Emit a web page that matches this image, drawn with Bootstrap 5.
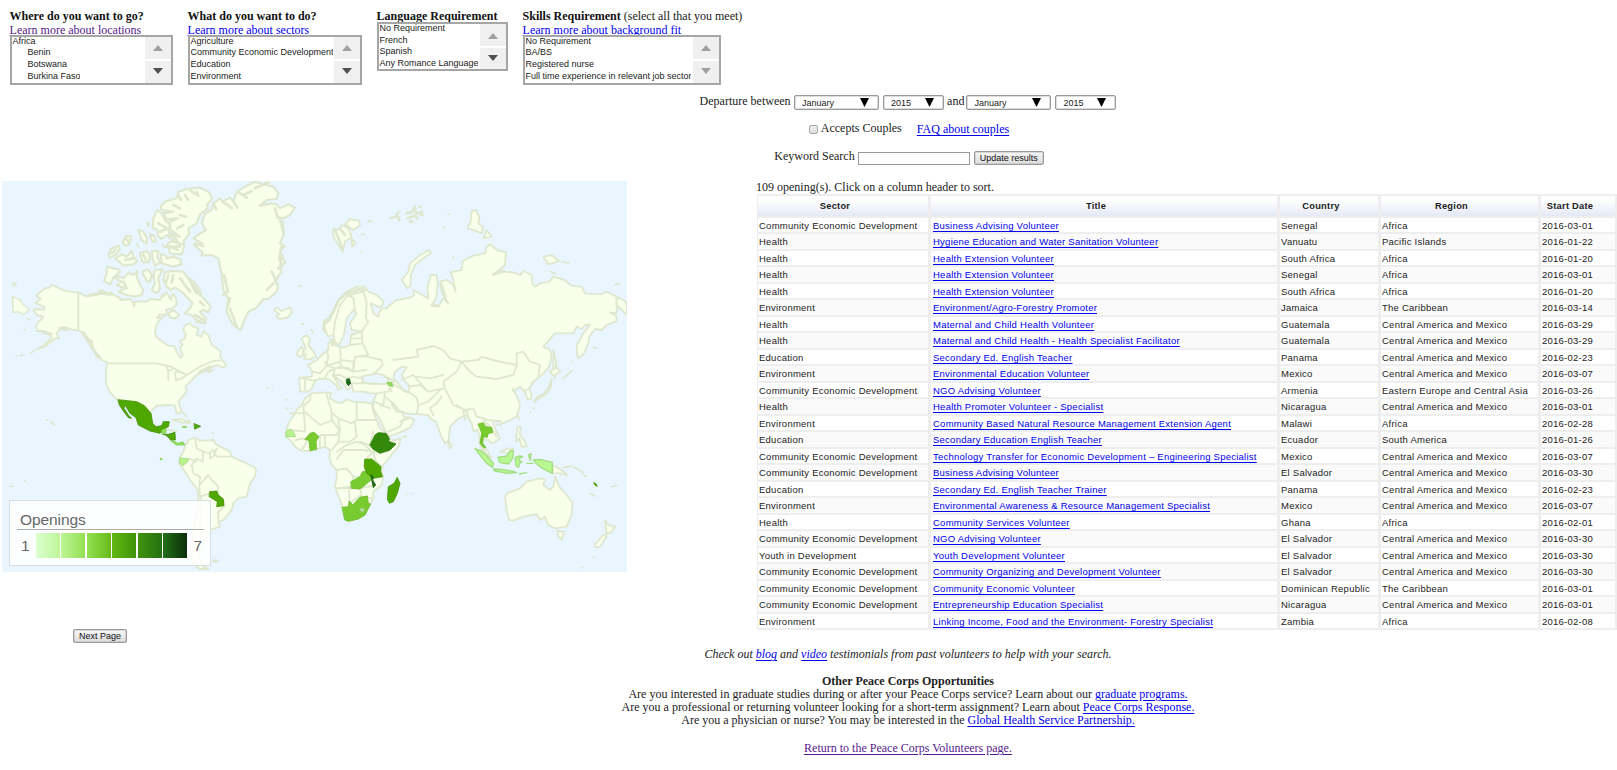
<!DOCTYPE html>
<html lang="en">
<head>
<meta charset="utf-8">
<title>Volunteer Openings</title>
<link href="https://cdn.jsdelivr.net/npm/bootstrap@5.3.0/dist/css/bootstrap.min.css" rel="stylesheet">
<script src="https://cdn.jsdelivr.net/npm/bootstrap@5.3.0/dist/js/bootstrap.bundle.min.js"></script>
<style>
body{font-family:"Liberation Serif",serif;font-size:12px;line-height:13.3px;color:#222;background:#fff;overflow:hidden;height:770px}
a{color:#0000ee}
a:hover{color:#0000ee}
a.seen{color:#551a8b}
.filters{padding:10px 0 0 9.6px;height:95px}
.filters b{color:#111}
.filters a{display:block;width:max-content;height:12px;line-height:14px;margin-bottom:-.4px}
.f1{width:178px}.f2{width:189px}.f3{width:146px}
.w1{width:163px}.w2{width:174px}.w3{width:131px}.w4{width:198px}
.pick{border:2px solid #a6a6a6;background:#fff;position:relative;font:9px/11.7px "Liberation Sans",sans-serif;height:50px}
.f3 .pick{height:49px;margin-top:-1px}
.opts{padding-left:.8px;height:46px;white-space:nowrap;overflow:hidden}
.opts div:first-child{margin-top:-1.4px}
.sub{padding-left:15px}
.bars{width:26px;gap:2px}
.bars span{background:#f0f0f0;flex:1;display:flex;align-items:center;justify-content:center}
.bars span::after{content:"";border:5px solid transparent;border-top:0;border-bottom:6px solid #a0a0a0;margin-top:1px}
.bars span.dn::after{border-bottom:0;border-top:6px solid #a0a0a0;margin-top:-1px}
.bars span.on::after{border-top-color:#505050}
.searcharea,.foot{margin-left:199px}
.searcharea{height:86px}
.sel{border:1px solid #999;border-radius:2px;height:15px;font:9px/14px "Liberation Sans",sans-serif;padding:0 9px 0 7px;box-shadow:inset 0 0 0 .5px #bbb}
.sel svg{width:9px;height:9px}
.mo{width:85px}.yr{width:61px}
.and{margin:0 2px 0 3px}
.kw{border:1px solid #999;width:112px;height:13px}
.push{font:9px/12px "Liberation Sans",sans-serif;color:#111;border:1px solid #999;border-radius:2px;background:linear-gradient(#f6f6f6,#dcdcdc);padding:0 5px;height:14px;box-shadow:inset 0 0 0 .5px #bbb}
.cb{width:9px;height:9px;border:1px solid #aaa;border-radius:2px;background:linear-gradient(#f0f0f0,#ddd);margin:3px 3px 0 2px}
.mapcol{width:757px;padding-left:2px}
.mapbox{width:625px;height:391px;position:relative}
.mapbox svg{display:block}
.legend{left:7px;top:319px;width:202px;height:66px;border:1px solid #d8dfe2;background:rgba(255,255,255,.85);font:15.5px/18px "Liberation Sans",sans-serif;color:#666;padding:10px 6px 0 7px}
.legend .ttl{padding-left:3px;height:19px;border-bottom:1.5px solid #aaa;margin-bottom:3px;letter-spacing:-.08px}
.scale{padding:0 2px 0 4px}
.sw{width:24px;height:25px}
.nextrow{padding:57px 0 0 71px}
.jobs{border-collapse:separate;border-spacing:0;table-layout:fixed;width:860px;margin-left:1px;font:9.5px/12px "Liberation Sans",sans-serif;letter-spacing:.245px;color:#222}
.jobs th{height:23px;border:solid #eee;border-width:2px 2px 1px 1px;background:linear-gradient(#fff 20%,#e4e9f5);text-align:center;padding:0 16px 0 0;color:#222;font-size:9.3px}
.jobs td{padding:1px 0 0 1px;border:solid #eee;border-width:1px 2px 1px 1px;white-space:nowrap;vertical-align:middle}
.jobs td:nth-child(2){padding-left:2px}
.jobs .o td{height:17px;border-bottom-width:2px}
.jobs .e td{height:16px;background:#fafafa;border-top-width:0}
.jobs a,.foot a,.searcharea a{text-underline-offset:2px}
.foot{padding-top:5px}
</style>
</head>
<body>
<div class="d-flex filters">
 <div class="f1"><b>Where do you want to go?</b><a class="seen" href="#">Learn more about locations</a>
  <div class="pick w1 d-flex justify-content-between"><div class="opts"><div>Africa</div><div class="sub">Benin</div><div class="sub">Botswana</div><div class="sub">Burkina Faso</div></div><div class="bars d-flex flex-column"><span></span><span class="dn on"></span></div></div></div>
 <div class="f2"><b>What do you want to do?</b><a href="#">Learn more about sectors</a>
  <div class="pick w2 d-flex justify-content-between"><div class="opts"><div>Agriculture</div><div>Community Economic Development</div><div>Education</div><div>Environment</div></div><div class="bars d-flex flex-column"><span></span><span class="dn on"></span></div></div></div>
 <div class="f3"><b>Language Requirement</b>
  <div class="pick w3 d-flex justify-content-between"><div class="opts"><div>No Requirement</div><div>French</div><div>Spanish</div><div>Any Romance Language</div></div><div class="bars d-flex flex-column"><span></span><span class="dn on"></span></div></div></div>
 <div><b>Skills Requirement</b> (select all that you meet)<a href="#">Learn more about background fit</a>
  <div class="pick w4 d-flex justify-content-between"><div class="opts"><div>No Requirement</div><div>BA/BS</div><div>Registered nurse</div><div>Full time experience in relevant job sector</div></div><div class="bars d-flex flex-column"><span></span><span class="dn"></span></div></div></div>
</div>
<div class="searcharea d-flex flex-column align-items-center">
 <div class="d-flex" style="height:27px"><span style="margin-right:3.5px">Departure between</span>
  <div class="sel mo d-flex justify-content-between align-items-center"><span>January</span><svg viewBox="0 0 9 9"><path d="M0 0H9L4.5 9z"/></svg></div>
  <div class="sel yr d-flex justify-content-between align-items-center ms-1"><span>2015</span><svg viewBox="0 0 9 9"><path d="M0 0H9L4.5 9z"/></svg></div>
  <span class="and">and</span>
  <div class="sel mo d-flex justify-content-between align-items-center"><span>January</span><svg viewBox="0 0 9 9"><path d="M0 0H9L4.5 9z"/></svg></div>
  <div class="sel yr d-flex justify-content-between align-items-center ms-1"><span>2015</span><svg viewBox="0 0 9 9"><path d="M0 0H9L4.5 9z"/></svg></div></div>
 <div class="d-flex align-items-start" style="height:28px"><span class="cb"></span><span>Accepts Couples</span><a href="#" style="line-height:14px;margin-left:15px">FAQ about couples</a></div>
 <div class="d-flex"><span style="margin:0 3px 0 2px">Keyword Search</span><span class="kw" style="margin-top:2px"></span><button class="push ms-1" style="margin-top:1px">Update results</button></div>
</div>
<div class="d-flex">
 <div class="mapcol">
  <div class="mapbox">
<svg width="625" height="391" viewBox="6 18 1875 1173" preserveAspectRatio="none" stroke-linejoin="round" stroke-linecap="round">
<rect x="0" y="0" width="1890" height="1200" fill="#e9f6ff"/>
<g fill="#f8ffeb" stroke="#dfe7cf" stroke-width="5.5">
<path d="M235,352L205,350 180,342 168,335 155,330 148,338 135,340 120,352 108,362 122,372 112,380 106,384 120,390 134,396 132,404 108,402 100,406 110,420 130,425 122,435 115,440 108,455 112,468 125,468 130,474 150,475 155,488 140,503 130,512 110,524 140,512 150,502 168,490 176,488 170,475 178,465 190,456 205,460 220,465 235,467 255,475 262,490 275,497 278,520 290,535 300,545 305,555 322,562 318,585 318,625 328,650 345,668 355,678 410,685 432,695 450,712 470,692 500,690 525,692 530,715 540,715 543,705 535,680 560,650 556,635 580,610 590,600 610,590 640,585 625,592 628,580 650,570 672,578 678,570 660,545 662,530 650,520 635,510 625,480 610,468 605,485 590,480 596,460 580,455 570,445 555,450 550,465 557,480 555,490 540,498 548,510 540,515 548,545 540,548 530,530 525,515 505,512 480,495 468,485 465,470 468,455 475,440 490,425 472,430 478,418 500,420 498,405 515,400 530,390 528,370 520,355 512,375 500,352 490,365 488,358 480,375 450,372 440,380 405,380 402,395 398,380 390,372 360,375 362,370 345,362 332,352 320,355 310,348 300,345 290,360 280,358 260,365Z"/>
<path d="M235,352V467M322,565H465L500,572 515,575 540,590 560,600 600,575 640,558 660,556M500,572 505,590 520,580 540,590 525,592 528,618M505,590 505,615M560,600 545,610 528,615" fill="none"/>
<path d="M180,460l20,4M250,475l28,45 18,28M265,362l40,-8 30,4M590,440l25,3M600,592l30,-15M128,470l24,8" fill="none" stroke-width="10"/>
<!-- Arctic islands -->
<g stroke-width="6.5">
<path d="M320,275L355,283 360,290 340,308 330,328 312,318 320,295ZM355,303L370,310 385,293 400,300 412,288 410,305 420,330 430,345 425,360 405,365 380,360 355,350 375,340 350,330 365,320 348,310ZM430,288L445,284 455,300 450,320 440,318 435,305 428,300ZM465,285L488,283 475,310 480,340 472,355 455,345 465,325 460,305ZM495,292L520,288 550,290 560,305 580,318 600,345 605,365 632,392 625,412 610,405 600,410 618,430 612,445 590,435 575,420 555,415 570,400 578,385 560,365 545,350 525,338 512,345 500,335 490,315ZM505,415L520,405 538,420 525,430 510,428ZM482,237L495,240 500,250 520,245 540,252 545,268 520,275 485,265ZM420,235L440,228 450,240 448,260 430,262 425,255ZM455,228L475,228 472,245 480,262 465,272 458,250ZM325,240L335,220 355,212 360,222 345,240 330,248ZM345,250L365,238 380,245 395,228 400,245 412,258 400,268 370,272 360,262ZM368,203L378,182 392,183 390,205 378,213ZM415,165L428,168 442,190 440,205 425,195ZM450,178L462,182 468,200 456,200ZM460,130L472,105 485,115 495,135 510,148 505,165 512,190 500,180 485,192 475,185 472,165 458,158ZM482,95L495,80 530,70 535,50 560,42 600,38 625,50 637,70 620,90 625,98 600,118 590,145 565,160 568,175 550,200 552,215 545,238 510,235 505,215 535,225 500,210 512,200 525,190 515,180 540,185 512,165 510,140 535,130 500,132 490,115 520,110 485,105Z"/>
<path d="M440,142L448,146 444,155ZM410,205l6,12M485,208l8,10M37,365L60,375 70,390 88,402 80,412 70,418 55,410 40,412ZM38,325h9v7h-8zM80,430l12,5M72,464l4,1M48,543l3,0M60,541l12,0M92,534l10,-6M110,524l12,-6" stroke-width="4.5"/>
<!-- Greenland -->
<path d="M580,190L600,175 618,165 605,145 615,115 635,105 640,85 660,70 668,80 690,68 700,78 712,50 735,35 765,20 790,28 820,35 835,55 830,72 800,75 780,92 815,85 830,88 840,100 865,88 885,98 870,120 850,130 838,128 845,155 850,180 840,205 855,215 840,225 845,240 855,262 840,280 845,290 825,318 835,330 830,350 805,372 790,372 770,398 745,410 735,430 722,465 710,458 695,442 680,410 685,370 670,345 665,300 655,250 635,240 605,242 608,232 582,210 608,205Z"/>
</g>
<path d="M640,85l8,18M668,80l28,20M712,50l28,18M730,60l25,-12M765,40l40,-18M700,78l12,20M825,100l8,28M845,215l-8,40M855,262l-20,18M815,290l10,20M800,345l20,-20M682,350l-12,10M690,370l-5,20M848,140l4,40M842,235v50M820,300l12,30M672,300l12,50M690,400l20,55M585,205l25,8M520,90l20,10M555,60l10,15M590,50l5,12M540,120l18,5M475,145l25,15M480,170l20,-8M535,60l8,15M570,45l15,12M520,200l25,8M515,175l18,25M550,150l-18,10M570,320l20,35M540,310l30,40M505,300l-8,25M370,320l10,20M565,310l35,50M585,420l25,15M600,380l12,12M520,300l-5,22M375,255l25,-5M430,240l8,14M335,235l12,-12M378,190l8,10M495,215h45" fill="none" stroke-width="8"/>
<path d="M822,405L830,398 845,408 870,397 876,412 862,428 840,432 828,425 838,418ZM898,334l7,-3M906,446l4,2M935,465l4,6M905,490L920,480 930,492 925,510 940,530 948,545 930,553 912,552 918,540 908,530 918,520ZM892,530L905,515 912,525 908,543 893,545Z"/>
<!-- Eurasia -->
<path d="M970,455L972,438 985,430 1000,410 1012,380 1030,360 1040,350 1060,340 1075,335 1092,335 1105,350 1130,360 1150,378 1148,390 1140,397 1112,385 1120,415 1135,425 1137,412 1148,400 1160,400 1170,390 1190,375 1230,368 1242,360 1240,345 1285,370 1282,340 1292,300 1310,300 1313,330 1310,365 1296,390 1315,395 1330,370 1345,385 1325,350 1320,320 1340,315 1360,330 1367,350 1360,315 1352,292 1385,285 1388,258 1420,242 1455,235 1460,215 1472,208 1490,225 1518,232 1515,270 1480,300 1495,290 1510,290 1540,292 1562,300 1570,288 1595,300 1597,325 1605,335 1620,325 1648,320 1660,305 1695,315 1712,332 1745,335 1755,355 1800,358 1820,350 1850,365 1850,415 1830,412 1850,425 1848,440 1820,450 1805,465 1785,462 1768,485 1765,505 1752,535 1735,550 1730,530 1732,508 1748,478 1770,448 1755,450 1745,462 1730,455 1720,475 1665,475 1630,515 1650,525 1655,545 1648,575 1625,600 1600,620 1588,640 1595,660 1593,672 1582,672 1575,650 1560,635 1540,650 1538,640 1550,662 1560,690 1550,725 1520,740 1505,745 1500,738 1478,740 1485,760 1500,790 1482,803 1475,805 1465,795 1450,792 1445,810 1462,830 1475,848 1465,842 1445,820 1438,800 1438,780 1432,765 1420,768 1415,745 1400,720 1375,730 1350,755 1346,795 1335,805 1322,780 1308,740 1292,732 1285,720 1260,718 1220,715 1195,705 1185,690 1175,688 1190,710 1205,712 1212,725 1228,728 1243,735 1230,758 1200,772 1165,785 1155,765 1140,735 1120,700 1120,680 1130,655 1115,655 1090,650 1060,650 1055,625 1050,640 1042,645 1035,635 1025,620 1005,605 998,600 1018,632 1025,640 1015,645 1010,632 990,615 975,610 955,612 945,618 935,640 925,650 900,650 898,608 935,605 937,590 925,570 950,555 965,540 985,525 985,505 1000,495 1005,512 1030,518 1050,510 1053,480 1088,470 1055,465 1050,445 1070,415 1060,405 1040,430 1035,460 1030,485 1015,512 1005,500 1000,480 985,485Z"/>
<path d="M1085,605l20,-5 25,-5 18,5 20,15 -10,12 -40,0 -28,-5zM1185,590l20,-15 15,2 -15,22 10,20 15,14 -4,20 -16,-5 -12,-20 -18,-18z" fill="#e9f6ff"/>
<path d="M975,470l-4,-20 18,-18 14,-28 14,-30 25,-20 40,-12 12,2M993,495l4,15M1322,325l14,40M1480,298l30,-10M1296,390l14,2" fill="none" stroke-width="9"/>
<path fill="none" d="M1000,480L1005,440 1020,390 1045,360 1060,370 1065,405M1045,360 1090,350M1090,345L1100,385 1098,430 1105,440 1085,470M1085,475L1088,505 1105,540 1065,545 1060,590M1050,510 1088,505M1055,490H1085M1065,545L1100,545 1145,555 1148,570 1120,598M1020,518L1022,555 1060,560 1060,590 1025,575 1020,560 980,572 975,560M980,525L985,545 980,570 1005,580 1045,578 1060,590 1100,585M1005,580L1000,600 1020,600 1040,610 1060,605 1085,610M940,590L960,595 980,572M975,610 985,590 1020,575M1040,610L1040,630M1050,625L1085,625 1090,615M915,615V645M898,608l40,8 15,-2M1148,600L1185,620 1165,625 1175,650M1060,625l70,0M1130,655L1165,650 1175,620M1155,650L1150,690 1120,680M1155,665L1185,690M1140,690L1170,700M1180,555L1255,545 1250,525 1300,513 1330,525 1350,550 1385,560 1435,555 1445,545 1490,558 1550,570 1550,535 1570,530 1590,560 1620,570 1615,600M1385,560L1405,585 1430,605 1490,612 1540,600 1550,570M1385,560L1370,590 1330,620 1335,640 1360,690 1395,705 1420,700M1225,635L1260,630 1285,650 1330,640M1205,615L1240,600 1275,640M1225,650L1250,668 1255,690 1250,718M1255,690L1285,680 1310,655 1320,645M1300,720L1290,700 1310,685 1325,665M1175,625L1220,650M1200,740L1232,728M1165,770L1200,755 1212,730M1370,690L1400,710 1405,725M1390,705L1395,735M1420,700L1430,725 1450,730 1462,735 1500,738M1450,730L1460,755 1478,765 1490,785M1445,750L1462,745 1475,760M1570,650 1590,640M1250,605L1290,610 1330,600"/>
<path d="M1205,315L1225,290 1230,265 1260,240 1288,225 1292,235 1270,250 1245,270 1232,300 1232,332 1222,340ZM1000,160L1015,165 1025,150 1045,160 1055,185 1035,200 1028,230 1012,205 1000,185ZM1035,148L1050,132 1078,138 1080,152 1060,165ZM1055,190l12,15 -10,10zM1415,108L1428,105 1438,125 1435,145 1450,155 1445,175 1420,165 1402,160 1412,140ZM1450,190L1460,165 1475,185ZM1630,245L1655,240 1678,258 1645,268ZM1685,260l20,4M1652,290l14,6M1845,330l12,-4M1850,365L1875,378 1881,390V420L1865,405 1850,390ZM1083,232h2M1110,139h4M1345,118h4M1330,157h6M1360,245v6M1660,525L1668,560 1665,610 1660,590ZM1780,516l8,4M1690,610l25,-22M1105,140l8,-2M1085,178h8M1300,300v1M1715,560v1"/>
<path d="M1172,130l22,-6 4,12M1190,117l8,-6M1218,115l18,-4 8,-16 4,20 18,-4M1222,130l22,-8 8,8M1230,140h8M1262,120h6M1258,95h2M1005,165l10,25 12,30M1020,160l15,20" fill="none" stroke-width="8"/>
<!-- Japan, Philippines, other islands of Asia and Oceania -->
<path d="M1650,590L1670,575 1680,590 1660,602ZM1655,610L1652,640 1635,660 1610,675 1602,682 1612,665 1630,658 1648,635ZM1552,758L1562,755 1560,780 1575,800 1580,815 1565,815 1558,790 1548,800ZM1554,722l4,12M1490,748l12,2M1346,800L1356,812 1350,820 1345,812ZM1500,830L1525,820 1540,822 1530,835ZM1445,818L1462,825 1470,845 1460,838ZM1658,870L1685,885 1702,900 1680,895 1658,895ZM1690,878l22,-5M1720,875l30,18M1752,900l6,4M1770,955l15,8M1835,935l15,-4M1220,957v1M1234,955v1M1210,786l10,-2M1590,712l1,-1M1600,700l1,-1"/>
<path d="M1515,965L1522,955 1560,940 1580,920 1600,915 1615,910 1635,913 1630,930 1650,945 1660,935 1665,905 1678,935 1700,960 1718,985 1715,1020 1700,1055 1665,1060 1645,1050 1635,1025 1620,1035 1610,1017 1570,1025 1540,1037 1527,1035 1520,1005ZM1672,1068L1692,1070 1685,1095 1675,1085ZM1815,1037L1825,1050 1845,1055 1835,1070 1820,1078 1818,1060ZM1785,1108L1810,1080 1820,1085 1800,1115 1788,1118ZM1780,1146h2M1745,1178h2"/>
<!-- South America -->
<path d="M555,815L565,795 585,788 600,797 640,795 648,808 690,830 695,845 740,865 768,880 765,905 750,925 740,965 715,970 700,985 695,1005 670,1035 655,1040 660,1055 630,1065 620,1085 610,1105 595,1145 610,1175 625,1182 600,1182 575,1165 570,1125 580,1065 595,985 593,945 570,915 545,875 537,865 540,845 550,830ZM640,1156h12v4h-12zM518,735L545,732 570,745 545,742ZM548,712l10,12M565,735l5,4M638,774v1M140,735h3M155,742l8,8M30,934h8M74,918h1M802,639h2M815,643h2M858,674h2M860,700h2M872,700h2"/>
<path fill="none" d="M585,788L590,820 610,830 608,860 590,850 575,870 580,895 600,905 598,930 625,900 635,915 655,935 652,955 668,975 672,995 655,1010M610,830L630,835 640,825 650,845 690,845M630,835V850L640,845 650,820M565,850L590,860M598,930L600,965 630,955M600,965L605,985 600,1040 605,1100M655,1010L655,1035M672,995l-18,18M490,760l40,10"/>
<!-- Africa -->
<g transform="translate(930,585)">
<path d="M5,70L-15,85 -25,105 -40,120 -52,140 -65,160 -70,180 -72,200 -55,215 -45,230 -25,242 0,243 20,238 45,230 60,240 58,262 65,285 80,300 80,325 75,350 88,385 97,410 105,440 110,452 130,450 155,440 180,405 190,385 190,365 215,345 220,320 213,300 220,285 240,260 265,230 273,205 250,212 235,205 225,185 210,175 200,150 190,125 185,100 160,97 130,95 110,88 95,100 75,95 60,85 62,68 30,68Z"/>
<path fill="none" d="M2,72L0,90 -20,108V130H-60M-20,110L-14,185 -60,180M50,75L65,125V150L85,175M140,95V150H200M65,128L85,145 125,160 140,150M135,160L140,200 120,215 90,215M85,150L90,175 80,195H30V230M-20,122L30,165 70,150M90,180L85,215 65,240M80,245L110,225 140,215 165,225 180,240M80,268L100,240H160L190,245 165,270V320H130L125,350 78,355M190,245L195,270 215,290M195,245H235M80,300L110,295 130,320M78,355H150L185,348M118,360V405M118,400L155,375 150,355M155,380L185,385M190,185L180,225 150,215M-45,210L-15,205M-25,242L-10,215M45,230V200"/>
</g>
</g>
<g stroke-width="2.5">
<!-- Mexico and Central America -->
<path fill="#4fa800" stroke="#458f08" d="M355,674L410,680 433,692 453,715 458,745 468,755 485,752 490,740 508,740 505,755 490,762 480,775 450,768 415,750 408,728 390,715 375,690 372,700 385,720 395,730 385,728 370,708 358,690ZM490,778L505,778 525,772 526,795 512,795 500,782ZM583,746L602,754 585,762ZM630,950L650,948 655,960 670,972 672,992 650,995 652,980 628,965Z"/>
<path fill="#8fe05a" stroke="#82ce52" d="M486,765l12,-4 0,12 -12,4zM512,797L525,800 535,805 548,800 555,810 530,810ZM548,755h12v2h-12zM482,850h4v4h-4z"/>
<path fill="#b8f28c" stroke="#a5da7f" d="M540,848L566,852 562,862 548,872 540,865Z"/>
<g transform="translate(930,585)">
<path fill="#b8f090" stroke="#a3d880" d="M-72,185L-60,177 -50,185 -43,200 -72,200Z"/>
<path fill="#78cc30" stroke="#6aba28" d="M-15,208L0,190 12,187 27,200 22,208 18,215 20,238 0,242 -3,212ZM123,335L150,320 157,305 175,305 187,315 183,330 165,345 150,357 125,355ZM97,412L115,410 118,393 128,405 150,382 172,378 175,400 182,402 165,435 145,447 115,454 105,450ZM505,162L520,158 525,170 545,172 548,188 535,190 532,202 520,200 518,220 528,233 520,232 510,220 515,190Z"/>
<path fill="#b8d9a0" stroke="#b0d098" d="M150,418l8,-4 5,6 -7,6z"/>
<path fill="#338a0a" stroke="#2c7b08" d="M180,225L195,195 205,188 228,190 238,205 236,214 258,222 240,240 210,250 190,238Z"/>
<path fill="#4fa800" stroke="#469600" d="M165,268L185,267 213,290 212,305 218,320 190,325 170,310 163,290ZM262,323L270,340 262,370 250,395 238,400 232,388 235,350 252,340ZM852,338l6,3 4,8 -6,-3z"/>
<path fill="#1d6b1a" stroke="#1b6018" d="M183,315L190,320 188,330 197,345 190,353 186,335ZM110,28L118,26 122,40 115,47 110,40Z"/>
<path fill="#8fe05a" stroke="#82ce52" d="M232,37L245,38 249,50 236,46Z"/>
<path fill="#b8f890" stroke="#a5dd85" stroke-width="4" d="M495,236L515,243 535,262 550,280 548,292 530,280 515,262ZM550,297L575,298 605,303 620,308 590,310 555,303ZM563,262L590,258 600,242 610,243 608,265 595,282 570,278ZM615,262l15,-4 8,2 -14,8 12,8 -8,4 -2,12 -8,-4zM655,255l8,-4 -2,20zM628,312l22,-4M670,270L690,268 727,277V310L705,300 690,290 678,280ZM650,280h20"/>
</g></g>
</svg>
   <div class="legend position-absolute"><div class="ttl">Openings</div>
    <div class="scale d-flex align-items-center justify-content-between"><span>1</span><div class="d-flex" style="gap:1.5px">
     <i class="sw" style="background:linear-gradient(90deg,#dcffd0,#bdf598)"></i><i class="sw" style="background:linear-gradient(90deg,#bdf598,#93e052)"></i><i class="sw" style="background:linear-gradient(90deg,#93e052,#68bb1a)"></i><i class="sw" style="background:linear-gradient(90deg,#62b814,#3f930a)"></i><i class="sw" style="background:linear-gradient(90deg,#3f930c,#257014)"></i><i class="sw" style="background:linear-gradient(90deg,#237018,#0c2e08)"></i></div><span>7</span></div></div>
  </div>
  <div class="nextrow"><button class="push d-block">Next Page</button></div>
 </div>
 <div>
  <div style="height:13px">109 opening(s). Click on a column header to sort.</div>
  <table class="jobs">
   <colgroup><col style="width:173px"><col style="width:349px"><col style="width:101px"><col style="width:160px"><col style="width:77px"></colgroup>
   <thead><tr><th>Sector</th><th>Title</th><th>Country</th><th>Region</th><th>Start Date</th></tr></thead>
   <tbody id="rows"></tbody>
  </table>
 </div>
</div>
<div class="foot text-center">
 <div style="height:26.5px"><i>Check out <a href="#">blog</a> and <a href="#">video</a> testimonials from past volunteers to help with your search.</i></div>
 <div><b>Other Peace Corps Opportunities</b></div>
 <div>Are you interested in graduate studies during or after your Peace Corps service? Learn about our <a href="#">graduate programs.</a></div>
 <div>Are you a professional or returning volunteer looking for a short-term assignment? Learn about <a href="#">Peace Corps Response.</a></div>
 <div style="height:27.5px">Are you a physician or nurse? You may be interested in the <a href="#">Global Health Service Partnership.</a></div>
 <div><a class="seen" href="#">Return to the Peace Corps Volunteers page.</a></div>
</div>
<script>
const C='Community Economic Development',H='Health',E='Environment',D='Education',A='Africa',M='Central America and Mexico';
const jobs=[
[C,'Business Advising Volunteer','Senegal',A,'03-01'],
[H,'Hygiene Education and Water Sanitation Volunteer','Vanuatu','Pacific Islands','01-22'],
[H,'Health Extension Volunteer','South Africa',A,'01-20'],
[H,'Health Extension Volunteer','Senegal',A,'03-01'],
[H,'Health Extension Volunteer','South Africa',A,'01-20'],
[E,'Environment/Agro-Forestry Promoter','Jamaica','The Caribbean','03-14'],
[H,'Maternal and Child Health Volunteer','Guatemala',M,'03-29'],
[H,'Maternal and Child Health - Health Specialist Facilitator','Guatemala',M,'03-29'],
[D,'Secondary Ed. English Teacher','Panama',M,'02-23'],
[E,'Environmental Education Volunteer','Mexico',M,'03-07'],
[C,'NGO Advising Volunteer','Armenia','Eastern Europe and Central Asia','03-26'],
[H,'Health Promoter Volunteer - Specialist','Nicaragua',M,'03-01'],
[E,'Community Based Natural Resource Management Extension Agent','Malawi',A,'02-28'],
[D,'Secondary Education English Teacher','Ecuador','South America','01-26'],
[C,'Technology Transfer for Economic Development – Engineering Specialist','Mexico',M,'03-07'],
[C,'Business Advising Volunteer','El Salvador',M,'03-30'],
[D,'Secondary Ed. English Teacher Trainer','Panama',M,'02-23'],
[E,'Environmental Awareness &amp; Resource Management Specialist','Mexico',M,'03-07'],
[H,'Community Services Volunteer','Ghana',A,'02-01'],
[C,'NGO Advising Volunteer','El Salvador',M,'03-30'],
['Youth in Development','Youth Development Volunteer','El Salvador',M,'03-30'],
[C,'Community Organizing and Development Volunteer','El Salvador',M,'03-30'],
[C,'Community Economic Volunteer','Dominican Republic','The Caribbean','03-01'],
[C,'Entrepreneurship Education Specialist','Nicaragua',M,'03-01'],
[E,'Linking Income, Food and the Environment- Forestry Specialist','Zambia',A,'02-08']];
document.getElementById('rows').innerHTML=jobs.map((j,i)=>`<tr class="${i%2?'e':'o'}"><td>${j[0]}</td><td><a href="#">${j[1]}</a></td><td>${j[2]}</td><td>${j[3]}</td><td>2016-${j[4]}</td></tr>`).join('');
</script>
</body>
</html>
